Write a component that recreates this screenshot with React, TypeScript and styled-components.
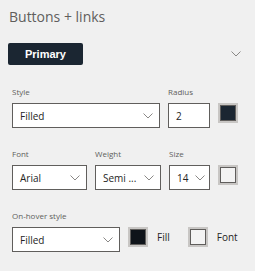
import styled, { createGlobalStyle } from 'styled-components';

const GlobalStyle = createGlobalStyle`
	html, body {
		margin: 0;
		padding: 0;
		background: #f0f0f0;
	}
	body {
		font-family: 'Open Sans', 'Noto Sans', sans-serif;
		color: #252423;
	}
`;

const Chevron = () => (
	<ChevronIcon width='10' height='6' viewBox='0 0 10 6' fill='none'>
		<polyline points='0.5,0.5 5,5 9.5,0.5' stroke='#8a8886' strokeWidth='1' />
	</ChevronIcon>
);

const App = () => {
	return (
		<Panel>
			<GlobalStyle />
			<Title>Buttons + links</Title>
			<Header>
				<PrimaryButton>Primary</PrimaryButton>
				<Chevron />
			</Header>

			<Section>
				<FieldGrid $cols='148px 42px 20px'>
					<Label>Style</Label>
					<Label>Radius</Label>
					<span />
					<Dropdown>
						<span>Filled</span>
						<Chevron />
					</Dropdown>
					<TextBox>2</TextBox>
					<Swatch $fill='#1b2632' />
				</FieldGrid>

				<FieldGrid $cols='75px 66px 41px 20px'>
					<Label>Font</Label>
					<Label>Weight</Label>
					<Label>Size</Label>
					<span />
					<Dropdown>
						<span>Arial</span>
						<Chevron />
					</Dropdown>
					<Dropdown>
						<span>Semi ...</span>
						<Chevron />
					</Dropdown>
					<Dropdown $compact>
						<span>14</span>
						<Chevron />
					</Dropdown>
					<Swatch $fill='#f3f3f3' />
				</FieldGrid>

				<FieldGrid $cols='108px auto'>
					<Label>On-hover style</Label>
					<span />
					<Dropdown>
						<span>Filled</span>
						<Chevron />
					</Dropdown>
					<ColorPair>
						<Swatch $fill='#0f141a' />
						<SwatchText>Fill</SwatchText>
						<Swatch $fill='#f3f3f3' />
						<SwatchText>Font</SwatchText>
					</ColorPair>
				</FieldGrid>
			</Section>
		</Panel>
	);
};

const Panel = styled.div`
	width: 255px;
	height: 271px;
	box-sizing: border-box;
	padding: 6px 14px 0 8px;
`;

const Title = styled.h2`
	margin: 0 0 0 1px;
	font-size: 14px;
	font-weight: 400;
	line-height: 22px;
	color: #605e5c;
`;

const Header = styled.div`
	display: flex;
	justify-content: space-between;
	align-items: center;
	margin-top: 15px;
`;

const ChevronIcon = styled.svg`
	flex-shrink: 0;
	display: block;
`;

const PrimaryButton = styled.button`
	width: 75px;
	height: 22px;
	border: none;
	border-radius: 2px;
	background: #1b2632;
	color: #ffffff;
	font-family: 'Liberation Sans', Arial, sans-serif;
	font-weight: 700;
	font-size: 11px;
	padding: 0;
`;

const Section = styled.div`
	padding-left: 4px;
	margin-top: 21px;
	display: flex;
	flex-direction: column;
	gap: 20px;
`;

const FieldGrid = styled.div<{ $cols: string }>`
	display: grid;
	grid-template-columns: ${(p) => p.$cols};
	column-gap: 8px;
	row-gap: 5px;
	align-items: start;
`;

const Label = styled.label`
	font-size: 8px;
	line-height: 12px;
	color: #605e5c;
	white-space: nowrap;
`;

const Dropdown = styled.div<{ $compact?: boolean }>`
	display: flex;
	align-items: center;
	justify-content: ${(p) => (p.$compact ? 'flex-start' : 'space-between')};
	gap: 7px;
	height: 25px;
	box-sizing: border-box;
	padding: 0 6px 0 7px;
	border: 1px solid #605e5c;
	background: #ffffff;
	font-size: 10px;
	color: #252423;
	white-space: nowrap;
	overflow: hidden;
`;

const TextBox = styled.div`
	display: flex;
	align-items: center;
	height: 25px;
	box-sizing: border-box;
	padding: 0 7px;
	border: 1px solid #605e5c;
	background: #ffffff;
	font-size: 10px;
`;

const Swatch = styled.div<{ $fill: string }>`
	width: 20px;
	height: 20px;
	box-sizing: border-box;
	border: 2px solid #c8c6c4;
	background: ${(p) => p.$fill};
	box-shadow: inset 0 0 0 1px #605e5c;
`;

const ColorPair = styled.div`
	display: flex;
	align-items: flex-start;
	gap: 9px;
`;

const SwatchText = styled.span`
	font-size: 10px;
	line-height: 20px;
	margin-right: 9px;
`;

export default App;
